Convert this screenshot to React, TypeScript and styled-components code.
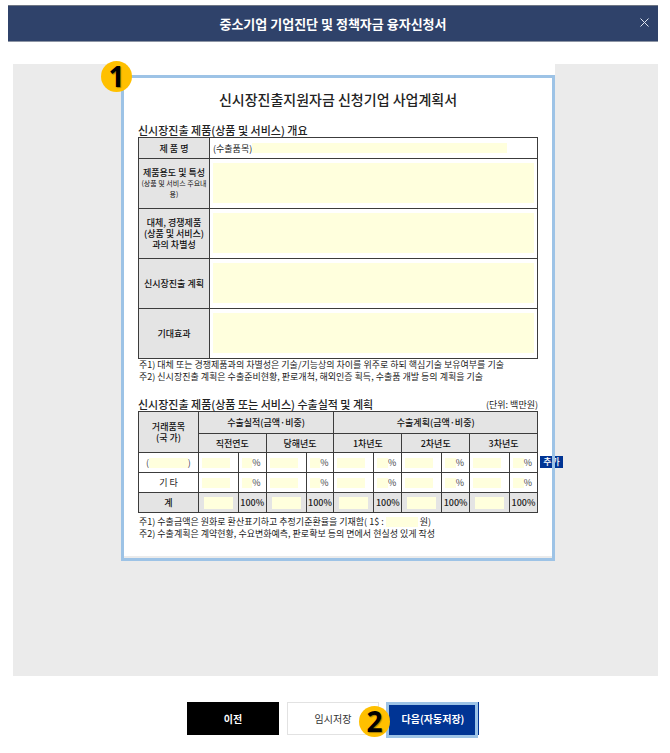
import React from "react";
import styled, { createGlobalStyle, css } from "styled-components";

const LINE = "#3c3c3c";
const YELLOW = "#ffffdd";
const HEAD = "#e4e4e4";
const MARK = "#9dc3e6";

const GlobalStyle = createGlobalStyle`
  *, *::before, *::after { box-sizing: border-box; }
  body {
    margin: 0;
    background: #fff;
    color: #222;
    font-family: "Noto Sans CJK KR", "Noto Sans", sans-serif;
    font-size: 9px;
    line-height: 11px;
  }
  button, input, textarea { font: inherit; color: inherit; border-radius: 0; }
`;

const Page = styled.div`
  padding: 5px 12px 16px 8px;
`;

const TopBar = styled.header`
  display: grid;
  grid-template-columns: 26px 1fr 26px;
  align-items: center;
  height: 37px;
  background: #2f426a;
  border-top: 1px solid #6e7684;
  border-bottom: 1px solid #8d95a4;
  color: #fff;
`;

const TopTitle = styled.h1`
  grid-column: 2;
  margin: 0;
  text-align: center;
  font-size: 13px;
  line-height: 20px;
  font-weight: 700;
  white-space: nowrap;
`;

const CloseButton = styled.button`
  display: flex;
  align-items: center;
  justify-content: center;
  height: 26px;
  padding: 0 2px 2px 0;
  border: 0;
  background: none;
  color: #dfe4ee;
`;

const Backdrop = styled.main`
  margin: 22px 0 0 5px;
  padding: 0 103px 120px 108px;
  background: #ebebeb;
`;

const Paper = styled.section`
  position: relative;
  padding: 25px 17px 16px;
  background: #fff;
`;

const Highlight = styled.div`
  position: absolute;
  inset: 11px 0 -5px;
  border: 3px solid ${MARK};
  pointer-events: none;
  z-index: 2;
`;

const Badge = styled.span<{ $place: "paper" | "button" }>`
  position: absolute;
  z-index: 3;
  display: flex;
  align-items: center;
  justify-content: center;
  width: 31px;
  height: 31px;
  border-radius: 50%;
  background: #ffc000;
  color: #000;
  font-family: "Noto Sans", "Open Sans", sans-serif;
  font-size: 28px;
  line-height: 31px;
  font-weight: 700;
  text-shadow: 1px 1px 1px rgba(0, 0, 0, 0.35);
  pointer-events: none;
  ${({ $place }) =>
    $place === "paper"
      ? css`
          top: -3px;
          left: -20px;
        `
      : css`
          top: 4px;
          left: -28px;
        `}
`;

const PaperTitle = styled.h2`
  margin: 0 0 14px;
  text-align: center;
  font-size: 14px;
  line-height: 20px;
  font-weight: 500;
  color: #222;
`;

const SectionHead = styled.div`
  display: flex;
  justify-content: space-between;
  align-items: center;
  height: 14px;
  white-space: nowrap;
`;

const SectionTitle = styled.h3`
  margin: 0;
  font-size: 11px;
  line-height: 14px;
  font-weight: 500;
  color: #222;
`;

const Table = styled.table`
  width: 100%;
  table-layout: fixed;
  border-collapse: collapse;
`;

const Row = styled.tr<{ $height: number }>`
  height: ${({ $height }) => $height}px;
`;

const LabelCol = styled.col`
  width: 71px;
`;

const ItemCol = styled.col`
  width: 15%;
`;

const AmountCol = styled.col`
  width: 10%;
`;

const RateCol = styled.col`
  width: 7%;
`;

const Th = styled.th`
  padding: 0;
  border: 1px solid ${LINE};
  background: ${HEAD};
  font-weight: 500;
  color: #111;
  white-space: pre-line;
`;

const Sub = styled.small`
  display: block;
  font-size: 7px;
  line-height: 11px;
  font-weight: 400;
`;

const Td = styled.td<{ $shaded?: boolean }>`
  position: relative;
  padding: 0;
  border: 1px solid ${LINE};
  background: ${({ $shaded }) => ($shaded ? HEAD : "#fff")};
  text-align: center;
  font-weight: ${({ $shaded }) => ($shaded ? 500 : 400)};
`;

const Area = styled.textarea`
  display: block;
  width: calc(100% - 6px);
  height: 40px;
  margin: 0 3px 2px;
  padding: 2px;
  border: 0;
  background: ${YELLOW};
  resize: none;
`;

const Field = styled.input<{ $tall?: boolean }>`
  flex: 1;
  width: 100%;
  min-width: 0;
  height: ${({ $tall }) => ($tall ? 12 : 10)}px;
  padding: 0 2px;
  border: 0;
  background: ${YELLOW};
`;

const ProductLine = styled.label`
  display: flex;
  align-items: center;
  padding: 0 30px 0 3px;
`;

const CellLine = styled.span<{ $kind: "amount" | "rate" | "total" | "name" }>`
  display: flex;
  align-items: center;
  padding: ${({ $kind }) =>
    ({ amount: "0 8px 0 3px", rate: "0 5px 0 3px", total: "0 5px", name: "0 7px" })[$kind]};
  color: #444;
`;

const AddButton = styled.button`
  position: absolute;
  top: 3px;
  left: calc(100% + 3px);
  width: 23px;
  height: 12px;
  padding: 0;
  border: 0;
  background: #003494;
  color: #fff;
  font-size: 9px;
  line-height: 12px;
  font-weight: 500;
`;

const Notes = styled.div<{ $gap: "before" | "after" }>`
  padding: ${({ $gap }) => ($gap === "after" ? "0 1px 14px" : "3px 1px 0")};
  line-height: 12px;
  white-space: nowrap;
`;

const Note = styled.p`
  display: flex;
  align-items: center;
  height: 12px;
  margin: 0;
`;

const RateField = styled(Field)`
  flex: none;
  width: 32px;
  margin: 0 2px;
`;

const Actions = styled.footer`
  display: flex;
  justify-content: center;
  gap: 8px;
  margin-top: 26px;
`;

const ActionSlot = styled.div`
  position: relative;
`;

const Action = styled.button<{ $tone: "dark" | "plain" | "primary" }>`
  display: block;
  width: 92px;
  height: 33px;
  padding: 0;
  font-size: 10px;
  white-space: nowrap;
  ${({ $tone }) =>
    ({
      dark: css`
        border: 0;
        background: #000;
        color: #fff;
        font-weight: 700;
      `,
      plain: css`
        border: 1px solid #e2e2e2;
        background: #fff;
        color: #333;
      `,
      primary: css`
        border: 0;
        background: #003494;
        color: #fff;
        font-weight: 700;
      `,
    })[$tone]}
`;

const ActionHighlight = styled.div`
  position: absolute;
  inset: 0 1px -3px -1px;
  border: 3px solid ${MARK};
  pointer-events: none;
`;

const overview = [
  { label: "제품용도 및 특성", sub: "(상품 및 서비스 주요내용)" },
  { label: "대체, 경쟁제품\n(상품 및 서비스)\n과의 차별성" },
  { label: "신시장진출 계획" },
  { label: "기대효과" },
];

const years = ["직전연도", "당해년도", "1차년도", "2차년도", "3차년도"];

function YearCells({ row, withAdd }: { row: string; withAdd?: boolean }) {
  return (
    <>
      {years.map((year, i) => (
        <React.Fragment key={year}>
          <Td>
            <CellLine $kind="amount">
              <Field aria-label={`${row} ${year} 금액`} />
            </CellLine>
          </Td>
          <Td>
            <CellLine $kind="rate">
              <Field aria-label={`${row} ${year} 비중`} />%
            </CellLine>
            {withAdd && i === years.length - 1 && <AddButton type="button">추가</AddButton>}
          </Td>
        </React.Fragment>
      ))}
    </>
  );
}

export default function App() {
  return (
    <>
      <GlobalStyle />
      <Page>
        <TopBar>
          <TopTitle>중소기업 기업진단 및 정책자금 융자신청서</TopTitle>
          <CloseButton type="button" aria-label="닫기">
            <svg width="9" height="9" viewBox="0 0 9 9" fill="none" stroke="currentColor" strokeWidth="1">
              <path d="M0.5 0.5L8.5 8.5M8.5 0.5L0.5 8.5" />
            </svg>
          </CloseButton>
        </TopBar>

        <Backdrop>
          <Paper>
            <PaperTitle>신시장진출지원자금 신청기업 사업계획서</PaperTitle>

            <SectionHead>
              <SectionTitle>신시장진출 제품(상품 및 서비스) 개요</SectionTitle>
            </SectionHead>
            <Table>
              <colgroup>
                <LabelCol />
                <col />
              </colgroup>
              <tbody>
                <Row $height={21}>
                  <Th scope="row">제 품 명</Th>
                  <Td>
                    <ProductLine>
                      (수출품목)
                      <Field />
                    </ProductLine>
                  </Td>
                </Row>
                {overview.map(({ label, sub }) => (
                  <Row $height={50} key={label}>
                    <Th scope="row">
                      {label}
                      {sub && <Sub>{sub}</Sub>}
                    </Th>
                    <Td>
                      <Area aria-label={label} />
                    </Td>
                  </Row>
                ))}
              </tbody>
            </Table>
            <Notes $gap="after">
              <Note>주1) 대체 또는 경쟁제품과의 차별성은 기술/기능상의 차이를 위주로 하되 핵심기술 보유여부를 기술</Note>
              <Note>주2) 신시장진출 계획은 수출준비현황, 판로개척, 해외인증 획득, 수출품 개발 등의 계획을 기술</Note>
            </Notes>

            <SectionHead>
              <SectionTitle>신시장진출 제품(상품 또는 서비스) 수출실적 및 계획</SectionTitle>
              <span>(단위: 백만원)</span>
            </SectionHead>
            <Table>
              <colgroup>
                <ItemCol />
                {years.map((year) => (
                  <React.Fragment key={year}>
                    <AmountCol />
                    <RateCol />
                  </React.Fragment>
                ))}
              </colgroup>
              <thead>
                <Row $height={22}>
                  <Th rowSpan={2} scope="col">{"거래품목\n(국 가)"}</Th>
                  <Th colSpan={4} scope="colgroup">수출실적(금액·비중)</Th>
                  <Th colSpan={6} scope="colgroup">수출계획(금액·비중)</Th>
                </Row>
                <Row $height={19}>
                  {years.map((year) => (
                    <Th colSpan={2} scope="colgroup" key={year}>{year}</Th>
                  ))}
                </Row>
              </thead>
              <tbody>
                <Row $height={20}>
                  <Td>
                    <CellLine $kind="name">
                      (<Field aria-label="거래품목 국가" />)
                    </CellLine>
                  </Td>
                  <YearCells row="품목" withAdd />
                </Row>
                <Row $height={20}>
                  <Td>기 타</Td>
                  <YearCells row="기타" />
                </Row>
                <Row $height={20}>
                  <Th scope="row">계</Th>
                  {years.map((year) => (
                    <React.Fragment key={year}>
                      <Td $shaded>
                        <CellLine $kind="total">
                          <Field $tall aria-label={`${year} 합계`} />
                        </CellLine>
                      </Td>
                      <Td $shaded>100%</Td>
                    </React.Fragment>
                  ))}
                </Row>
              </tbody>
            </Table>
            <Notes $gap="before">
              <Note>
                <label htmlFor="rate">주1) 수출금액은 원화로 환산표기하고 추정기준환율을 기재함( 1$ :</label>
                <RateField id="rate" />
                원)
              </Note>
              <Note>주2) 수출계획은 계약현황, 수요변화예측, 판로확보 등의 면에서 현실성 있게 작성</Note>
            </Notes>
            <Highlight />
            <Badge $place="paper">1</Badge>
          </Paper>
        </Backdrop>

        <Actions>
          <Action type="button" $tone="dark">이전</Action>
          <Action type="button" $tone="plain">임시저장</Action>
          <ActionSlot>
            <Action type="button" $tone="primary">다음(자동저장)</Action>
            <ActionHighlight />
            <Badge $place="button">2</Badge>
          </ActionSlot>
        </Actions>
      </Page>
    </>
  );
}
